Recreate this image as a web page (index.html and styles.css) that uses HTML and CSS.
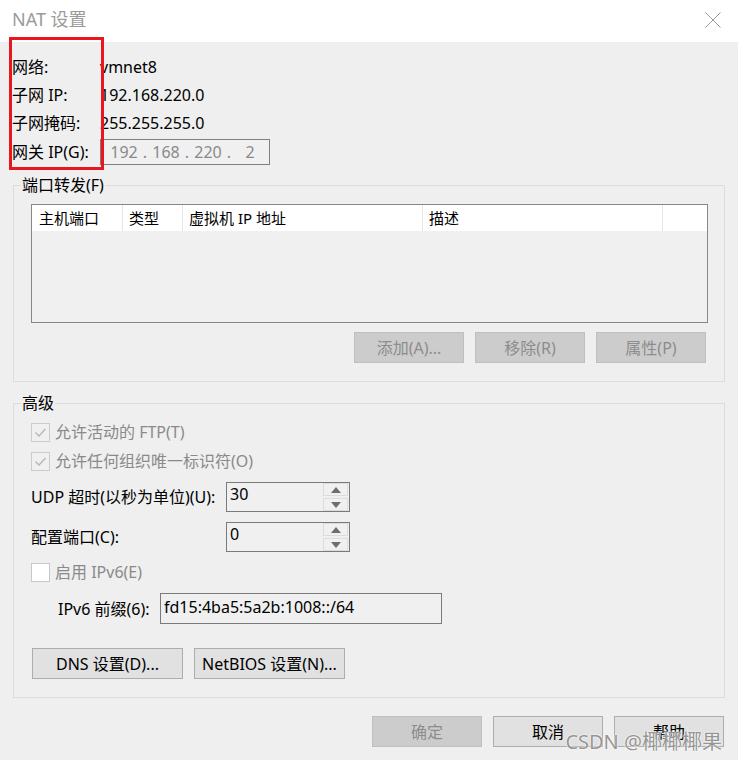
FILE: index.html
```html
<!DOCTYPE html>
<html lang="zh-CN">
<head>
<meta charset="utf-8">
<title>NAT 设置</title>
<link rel="stylesheet" href="styles.css">
</head>
<body>
<div class="window">
  <div class="titlebar">
    <span class="title">NAT 设置</span>
    <svg class="close" width="16" height="16" viewBox="0 0 16 16"><path d="M0.5 0.5 L15.5 15.5 M15.5 0.5 L0.5 15.5" stroke="#9a9a9a" stroke-width="1" fill="none"/></svg>
  </div>
  <div class="content">
    <div class="info">
      <div class="lbl">网络:</div><div class="val">vmnet8</div>
      <div class="lbl">子网 IP:</div><div class="val">192.168.220.0</div>
      <div class="lbl">子网掩码:</div><div class="val">255.255.255.0</div>
      <div class="lbl">网关 IP(G):</div>
      <div class="ipbox"><span class="oct">192</span><span class="dot">.</span><span class="oct">168</span><span class="dot">.</span><span class="oct">220</span><span class="dot">.</span><span class="oct">2</span></div>
    </div>

    <fieldset class="group g1">
      <legend>端口转发(F)</legend>
      <div class="table">
        <div class="thead">
          <div class="th c1">主机端口</div>
          <div class="th c2">类型</div>
          <div class="th c3">虚拟机 IP 地址</div>
          <div class="th c4">描述</div>
          <div class="th c5"></div>
        </div>
      </div>
      <div class="btnrow">
        <button class="btn disabled">添加(A)...</button>
        <button class="btn disabled">移除(R)</button>
        <button class="btn disabled">属性(P)</button>
      </div>
    </fieldset>

    <fieldset class="group g2">
      <legend>高级</legend>
      <div class="cbrow">
        <span class="cb"><svg width="17" height="17" viewBox="0 0 17 17"><path d="M3.5 8.5 L7 12 L13.5 5" stroke="#b4b4b4" stroke-width="1.3" fill="none"/></svg></span>
        <span>允许活动的 FTP(T)</span>
      </div>
      <div class="cbrow cb2">
        <span class="cb"><svg width="17" height="17" viewBox="0 0 17 17"><path d="M3.5 8.5 L7 12 L13.5 5" stroke="#b4b4b4" stroke-width="1.3" fill="none"/></svg></span>
        <span>允许任何组织唯一标识符(O)</span>
      </div>
      <div class="spinrow udp">
        <span class="spinlbl">UDP 超时(以秒为单位)(U):</span>
        <div class="spinner">
          <span class="spinval">30</span>
          <div class="arrows">
            <span class="arr"><svg width="10" height="6" viewBox="0 0 10 6"><path d="M0 6 L5 0 L10 6 Z" fill="#6e6e6e"/></svg></span>
            <span class="arr"><svg width="10" height="6" viewBox="0 0 10 6"><path d="M0 0 L5 6 L10 0 Z" fill="#6e6e6e"/></svg></span>
          </div>
        </div>
      </div>
      <div class="spinrow port">
        <span class="spinlbl">配置端口(C):</span>
        <div class="spinner">
          <span class="spinval">0</span>
          <div class="arrows">
            <span class="arr"><svg width="10" height="6" viewBox="0 0 10 6"><path d="M0 6 L5 0 L10 6 Z" fill="#6e6e6e"/></svg></span>
            <span class="arr"><svg width="10" height="6" viewBox="0 0 10 6"><path d="M0 0 L5 6 L10 0 Z" fill="#6e6e6e"/></svg></span>
          </div>
        </div>
      </div>
      <div class="cbrow ipv6">
        <span class="cb empty"></span>
        <span>启用 IPv6(E)</span>
      </div>
      <div class="prefixrow">
        <span class="prefixlbl">IPv6 前缀(6):</span>
        <div class="prefixbox">fd15:4ba5:5a2b:1008::/64</div>
      </div>
      <div class="dnsrow">
        <button class="btn wide">DNS 设置(D)...</button>
        <button class="btn wide">NetBIOS 设置(N)...</button>
      </div>
    </fieldset>

    <div class="footer">
      <button class="btn disabled">确定</button>
      <button class="btn">取消</button>
      <button class="btn">帮助</button>
    </div>
  </div>
  <div class="redbox"></div>
  <div class="watermark">CSDN @椰椰椰果</div>
</div>
</body>
</html>
```

FILE: styles.css
```css
html, body {
  margin: 0;
  padding: 0;
  background: #efefef;
}

body {
  font-family: "Noto Sans", "Noto Sans CJK SC", sans-serif;
  font-size: 16px;
  color: #000;
}

.window {
  position: relative;
  width: 738px;
  height: 760px;
  background: #efefef;
  overflow: hidden;
}

.titlebar {
  height: 42px;
  background: #fff;
  display: flex;
  justify-content: space-between;
  align-items: flex-start;
  padding: 0 17px 0 12px;
  box-sizing: border-box;
}

.title {
  font-size: 18px;
  line-height: 24px;
  color: #9b9b9b;
  margin-top: 7px;
}

.close {
  margin-top: 12px;
}

.content {
  padding: 11px 13px 0;
}

.info {
  display: grid;
  grid-template-columns: 88px auto;
  grid-template-rows: 28px 28px 28px 30px;
  align-items: center;
  justify-content: start;
  margin-left: -1px;
  line-height: 20px;
}

.ipbox {
  width: 170px;
  height: 26px;
  box-sizing: border-box;
  border: 1px solid #7f7f7f;
  background: #f0f0f0;
  display: flex;
  align-items: center;
  padding-left: 8px;
  color: #8a8a8a;
}

.oct {
  display: inline-block;
  width: 30px;
  text-align: center;
}

.dot {
  display: inline-block;
  width: 12px;
  text-align: center;
}

.group {
  margin: 0;
  border: 1px solid #dcdcdc;
  min-width: 0;
}

.group legend {
  margin-left: -10px;
  padding: 0 1px;
  font-size: 16px;
  line-height: 18px;
}

.g1 {
  margin-top: 9px;
  padding: 10px 16px 18px 17px;
}

.table {
  height: 119px;
  box-sizing: border-box;
  border: 1px solid #828790;
  background: #f0f0f0;
}

.thead {
  display: flex;
  height: 26px;
  background: #fff;
}

.th {
  box-sizing: border-box;
  border-right: 1px solid #e5e5e5;
  padding-left: 6px;
  font-size: 15px;
  line-height: 26px;
  white-space: nowrap;
}

.c1 { width: 91px; padding-left: 7px; }
.c2 { width: 60px; }
.c3 { width: 240px; }
.c4 { width: 240px; }
.c5 { flex: 1; border-right: none; }

.btnrow {
  display: flex;
  justify-content: flex-end;
  gap: 11px;
  margin-top: 9px;
  padding-right: 2px;
}

.btn {
  width: 110px;
  height: 31px;
  box-sizing: border-box;
  border: 1px solid #adadad;
  background: #e1e1e1;
  font-family: "Noto Sans", "Noto Sans CJK SC", sans-serif;
  font-size: 16px;
  line-height: 20px;
  color: #000;
  padding: 0;
  margin: 0;
}

.btn.disabled {
  background: #cccccc;
  border-color: #bfbfbf;
  color: #8d8d8d;
}

.g2 {
  margin-top: 12px;
  padding: 6px 16px 18px 17px;
}

.cbrow {
  display: flex;
  align-items: center;
  gap: 5px;
  height: 28px;
  color: #8a8a8a;
  line-height: 20px;
}

.cb2 {
  margin-top: 1px;
}

.cb {
  width: 19px;
  height: 19px;
  box-sizing: border-box;
  border: 1px solid #cccccc;
  background: #f0f0f0;
  display: flex;
}

.cb.empty {
  background: #fff;
  border-color: #c8c8c8;
}

.spinrow {
  display: flex;
  align-items: center;
  line-height: 20px;
}

.udp { margin-top: 7px; }
.port { margin-top: 10px; }

.spinlbl {
  width: 195px;
}

.spinner {
  width: 124px;
  height: 30px;
  box-sizing: border-box;
  border: 1px solid #7a7a7a;
  display: flex;
  background: #f0f0f0;
}

.spinval {
  flex: 1;
  padding: 1px 0 0 3px;
}

.arrows {
  width: 25px;
  display: flex;
  flex-direction: column;
  gap: 2px;
  padding: 0 1px 0 0;
}

.arr {
  flex: 1;
  box-sizing: border-box;
  border: 1px solid #dcdcdc;
  background: #f0f0f0;
  display: flex;
  align-items: center;
  justify-content: center;
}

.ipv6 { margin-top: 6px; }

.prefixrow {
  display: flex;
  align-items: center;
  margin-top: 7px;
  line-height: 20px;
}

.prefixlbl {
  width: 102px;
  padding-left: 27px;
}

.prefixbox {
  width: 282px;
  height: 31px;
  box-sizing: border-box;
  border: 1px solid #7a7a7a;
  background: #f0f0f0;
  padding: 3px 0 0 3px;
}

.dnsrow {
  display: flex;
  gap: 11px;
  margin-top: 24px;
  margin-left: 1px;
}

.btn.wide {
  width: 151px;
}

.footer {
  display: flex;
  justify-content: flex-end;
  gap: 11px;
  margin-top: 18px;
  padding-right: 1px;
}

.redbox {
  position: absolute;
  left: 9px;
  top: 37px;
  width: 95px;
  height: 133px;
  box-sizing: border-box;
  border: 3px solid #e8171f;
}

.watermark {
  position: absolute;
  right: 16px;
  top: 729px;
  font-size: 20px;
  line-height: 26px;
  color: rgba(130, 130, 130, 0.85);
  text-shadow: 0 0 2px #fff, 0 0 1px #fff;
  white-space: nowrap;
}
```
